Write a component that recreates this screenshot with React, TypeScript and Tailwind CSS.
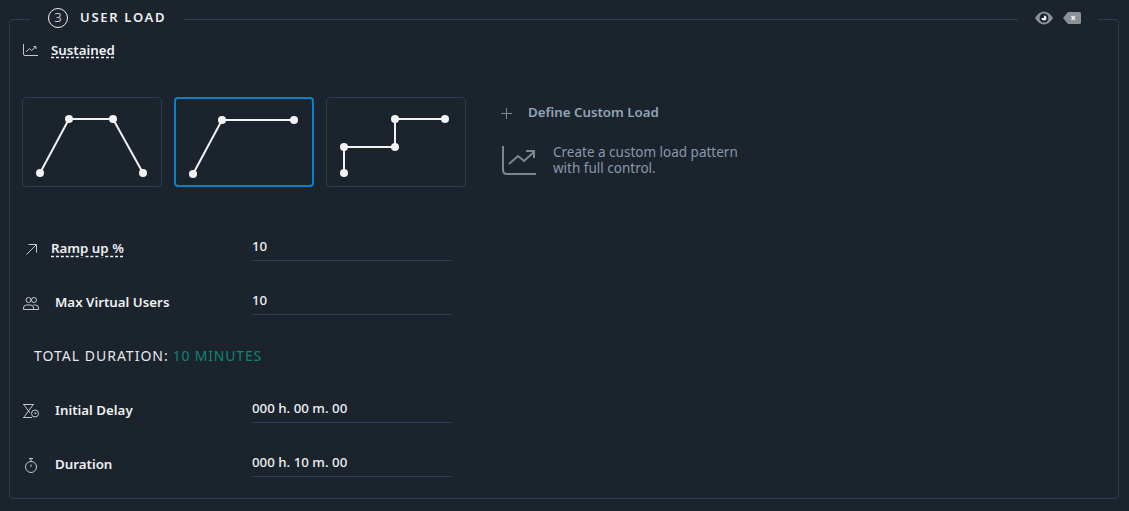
import React from 'react';

const font = { fontFamily: '"Noto Sans", sans-serif' };

// load pattern thumbnails, points are relative to the 140x90 card
const patterns = [
  { id: 'ramp-up-down', points: [[18, 76], [47, 22], [91, 22], [121, 76]], active: false },
  { id: 'sustained', points: [[19, 77], [48, 23], [120, 23]], active: true },
  { id: 'steps', points: [[18, 76], [18, 50], [69, 50], [69, 22], [119, 22]], active: false },
];

const TrendIcon: React.FC<{ className: string }> = ({ className }) => (
  <svg viewBox="0 0 34 30" fill="none" stroke="currentColor" strokeWidth="2" className={className}>
    <path d="M1 1v24q0 4 4 4h29" />
    <path d="M7 19l9-8 6 5 10-9M24 6h8v7" />
  </svg>
);

const SmallTrendIcon = () => (
  <svg viewBox="0 0 15 12" fill="none" stroke="currentColor" strokeWidth="1" className="w-[15px] h-[12px] text-[#c4c8cc]">
    <path d="M.5 0v10q0 1.500 1.500 1.500h13" />
    <path d="M3 8l3.500-3.500 2 2L13 2.500M10.500 2.500H13V5" />
  </svg>
);

const RampIcon = () => (
  <svg viewBox="0 0 11 11" fill="none" stroke="currentColor" strokeWidth="1" className="w-[11px] h-[11px] text-[#c4c8cc]">
    <path d="M.5 10.500L10 1M2.500 .5H10.500V8.500" />
  </svg>
);

const UsersIcon = () => (
  <svg viewBox="0 0 16 13" fill="none" stroke="currentColor" strokeWidth="1" className="w-4 h-[13px] text-[#c4c8cc]">
    <circle cx="5.500" cy="3" r="2.500" />
    <circle cx="11" cy="3" r="2.500" />
    <path d="M.5 12.500v-1.500q0-3 3-3h4q3 0 3 3v1.500zM10.500 8h2q3 0 3 3v1.500h-5" />
  </svg>
);

const DelayIcon = () => (
  <svg viewBox="0 0 16 14" fill="none" stroke="currentColor" strokeWidth="1" className="w-4 h-[14px] text-[#c4c8cc]">
    <path d="M0 .5h11M0 13.500h9M1.500 .5v1L5.500 7l-4 5.500v1M9.500 .5v1L5.500 7l1.500 2" />
    <circle cx="12" cy="9.500" r="3.500" />
    <path d="M12 8v1.500h1.500" />
  </svg>
);

const TimerIcon = () => (
  <svg viewBox="0 0 12 15" fill="none" stroke="currentColor" strokeWidth="1" className="w-3 h-[15px] text-[#c4c8cc]">
    <circle cx="6" cy="9" r="5.500" />
    <path d="M4 .5h4M6 .5v3M6 6.500V9" />
  </svg>
);

const PlusIcon = () => (
  <svg viewBox="0 0 11 11" fill="none" stroke="#7d8791" strokeWidth="1" className="w-[11px] h-[11px]">
    <path d="M5.500 0v11M0 5.500h11" />
  </svg>
);

const EyeIcon = () => (
  <svg viewBox="0 0 18 14" className="w-[18px] h-[14px]">
    <path d="M0 7Q4 .5 9 .5T18 7Q14 13.500 9 13.500T0 7z" fill="#8b9197" />
    <circle cx="9" cy="7" r="4.500" fill="#1b232d" />
    <path d="M9 4.500a2.500 2.500 0 1 1-2.500 2.500H9z" fill="#f2f2f2" />
  </svg>
);

const ClearIcon = () => (
  <svg viewBox="0 0 18 12" className="w-[18px] h-3">
    <path d="M5 0h11.500q1.500 0 1.500 1.500v9q0 1.500-1.500 1.500H5L0 6z" fill="#8b9197" />
    <path d="M8.500 4l3.500 4M12 4L8.500 8" stroke="#f2f2f2" strokeWidth="1.300" />
  </svg>
);

const PatternCard: React.FC<{ points: number[][]; active: boolean }> = ({ points, active }) => (
  <div className={`w-[140px] h-[90px] rounded ${active ? 'border-2 border-[#0b80c8]' : 'border border-[#2b3d50]'}`}>
    <svg viewBox="0 0 140 90" className={`w-[140px] h-[90px] ${active ? '-m-[2px]' : '-m-px'}`}>
      <polyline points={points.map((p) => p.join(',')).join(' ')} fill="none" stroke="#f2f2f2" strokeWidth="2" />
      {points.map(([x, y]) => (
        <circle key={`${x}-${y}`} cx={x} cy={y} r="4" fill="#f2f2f2" />
      ))}
    </svg>
  </div>
);

const FieldRow: React.FC<{ icon: React.ReactNode; label: string; value: string; dashed?: boolean }> = ({ icon, label, value, dashed }) => (
  <div className="flex items-center h-[54px]">
    <div className="w-4 flex justify-center">{icon}</div>
    {dashed ? (
      <span className="ml-3 w-[201px] text-[13.300px] font-semibold text-[#eef0f2] underline decoration-dashed underline-offset-[3px]">{label}</span>
    ) : (
      <span className="ml-4 w-[197px] text-[13.300px] font-semibold text-[#eef0f2]">{label}</span>
    )}
    <div className="w-[200px] h-[30px] -mt-[7px] pt-[6px] border-b border-[#2b3d50] text-[13.300px] font-medium text-[#eef0f2]">{value}</div>
  </div>
);

export default function App() {
  return (
    <div className="w-[1129px] h-[511px] bg-[#1b232d] pt-[19px] pl-[9px] pr-[10px] overflow-hidden" style={font}>
      <div className="h-[480px] border border-[#2b3d50] rounded">
        {/* title sits on the top border */}
        <div className="flex justify-between h-[20px] -mt-[12px] ml-[20px] mr-[20px]">
          <div className="flex items-center gap-3 h-[20px] px-[18px] bg-[#1b232d]">
            <div className="w-5 h-5 rounded-full border border-[#f2f2f2] flex items-center justify-center text-[13px] font-light text-[#f2f2f2]">3</div>
            <span className="text-[13px] font-semibold tracking-[1.700px] text-[#eef0f2]">USER LOAD</span>
          </div>
          <div className="flex items-center gap-[10px] w-[80px] justify-center h-[20px] bg-[#1b232d]">
            <EyeIcon />
            <ClearIcon />
          </div>
        </div>

        <div className="pl-[13px]">
          <div className="flex items-center h-[20px] mt-[12px]">
            <SmallTrendIcon />
            <span className="ml-[13px] mt-[2px] text-[13.300px] font-semibold text-[#eef0f2] underline decoration-dashed underline-offset-[2px]">Sustained</span>
          </div>

          <div className="flex mt-[37px] -ml-px">
            <div className="flex gap-3">
              {patterns.map((p) => (
                <PatternCard key={p.id} points={p.points} active={p.active} />
              ))}
            </div>
            <div className="ml-[35px] mt-[6px]">
              <div className="flex items-center h-[20px]">
                <span className="w-[27px]">
                  <PlusIcon />
                </span>
                <span className="text-[13.300px] font-semibold text-[#93a5b6]">Define Custom Load</span>
              </div>
              <div className="flex items-center mt-[21px] ml-px">
                <TrendIcon className="w-[34px] h-[30px] text-[#7d8791]" />
                <p className="ml-[17px] text-[13.500px] leading-4 text-[#8799ab]">
                  Create a custom load pattern
                  <br />
                  with full control.
                </p>
              </div>
            </div>
          </div>

          <div className="mt-[35px]">
            <FieldRow icon={<RampIcon />} label="Ramp up %" value="10" dashed />
            <FieldRow icon={<UsersIcon />} label="Max Virtual Users" value="10" />
            <div className="flex items-center h-[54px] pl-[11px] pb-1 text-[14px] tracking-[1px] text-[#e6e8ea]">
              TOTAL DURATION:
              <span className="ml-[4px] tracking-[.8px] text-[#0f8575]">10 MINUTES</span>
            </div>
            <FieldRow icon={<DelayIcon />} label="Initial Delay" value="000 h. 00 m. 00" />
            <FieldRow icon={<TimerIcon />} label="Duration" value="000 h. 10 m. 00" />
          </div>
        </div>
      </div>
    </div>
  );
}
